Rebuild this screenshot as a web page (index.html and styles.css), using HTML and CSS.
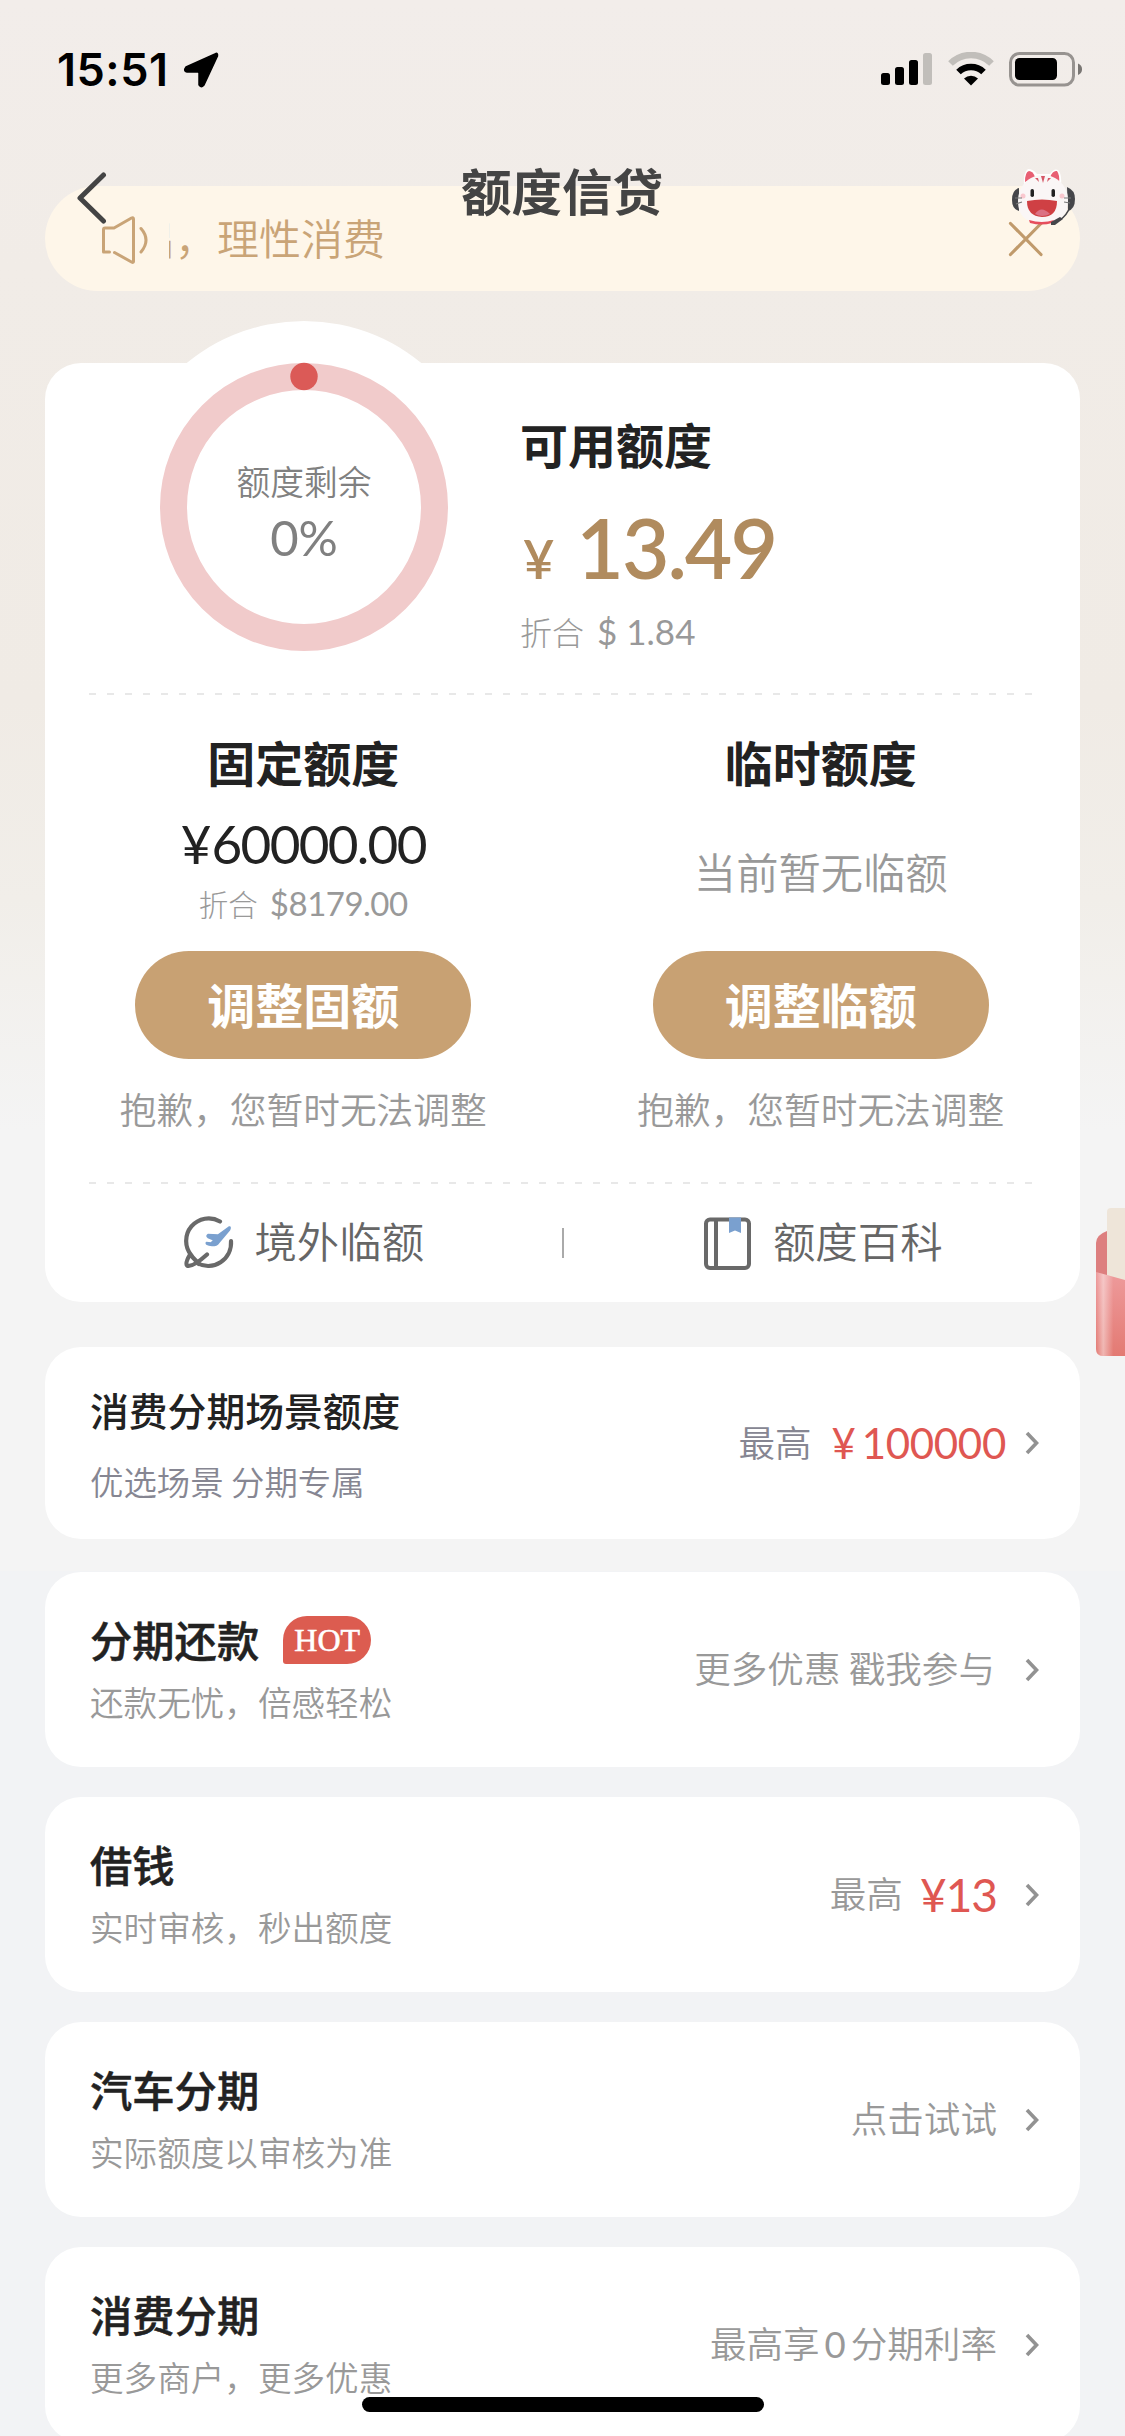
FILE: index.html
```html
<!DOCTYPE html>
<html lang="zh-CN">
<head>
<meta charset="utf-8">
<title>额度信贷</title>
<link rel="stylesheet" href="styles.css">
</head>
<body>
<header class="header">
  <div class="status">
    <div class="status-left">
      <span class="clock">15:51</span>
      <svg class="location" width="36" height="36" viewBox="0 0 36 36"><path d="M32 2 3 15 Q0 19 4 20H15Q16 20 16 21V33Q18 36.500 21 33L34.500 4Q35 0 32 2Z" stroke="#000" stroke-width="1.500" stroke-linejoin="round"/></svg>
    </div>
    <div class="status-right">
      <svg width="52" height="34" viewBox="0 0 52 34"><rect x="0" y="21" width="9" height="12" rx="2.500"/><rect x="14" y="15" width="9" height="18" rx="2.500"/><rect x="28" y="8" width="9" height="25" rx="2.500"/><rect x="42" y="1" width="9" height="32" rx="2.500" fill="#c1beba"/></svg>
      <svg width="46" height="34" viewBox="0 0 46 34"><path d="M2.500 11.500A29 29 0 0 1 43.500 11.500" fill="none" stroke="#c1beba" stroke-width="6.500"/><path d="M10.500 20A18 18 0 0 1 35.500 20" fill="none" stroke="#000" stroke-width="6.500"/><path d="M16 26.500A10.500 10.500 0 0 1 30 26.500L23 33.500Z"/></svg>
      <svg width="74" height="35" viewBox="0 0 74 35"><rect x="1.500" y="1.500" width="63" height="31.500" rx="9" fill="none" stroke="#979390" stroke-width="3"/><rect x="6" y="6" width="42" height="22" rx="4.500"/><path d="M69 11.500Q73 13 73 17.300Q73 21.600 69 23Z" fill="#797673"/></svg>
    </div>
  </div>
  <nav class="nav">
    <svg class="back" width="30" height="52" viewBox="0 0 30 52"><path d="M26.500 3 3 26 26.500 49" fill="none" stroke="#444" stroke-width="5" stroke-linecap="round" stroke-linejoin="round"/></svg>
    <h1 class="title">额度信贷</h1>
    <svg class="mascot" width="66" height="58" viewBox="0 0 66 58">
      <path d="M8 20Q1 22 1 32Q1 41 8 43Z" fill="#45464a"/><path d="M56 19Q64 22 64 31Q64 41 57 43Z" fill="#45464a"/>
      <path d="M13 18Q12 4 17 1Q22 1 26 6L39 6Q43 0 47 2Q51 6 50 18Z" fill="#fff"/>
      <path d="M14 14Q14 4 18 3Q22 3 24 9Z" fill="#e85f73"/><path d="M39 9Q42 2 46 3Q49 7 48 15Z" fill="#e85f73"/>
      <path d="M32 7C46 7 57 18 57 32C57 48 49 55 32 55C15 55 7 48 7 33C7 18 18 7 32 7Z" fill="#faf6f6"/>
      <path d="M30 8h4l-2 7ZM24 10l4 4-1-4ZM40 10l-4 4 1-4Z" fill="#d65867"/>
      <rect x="19.500" y="21" width="3.500" height="8" rx="1.700" fill="#222"/><rect x="40.500" y="21" width="3.500" height="8" rx="1.700" fill="#222"/>
      <path d="M16 33Q31 30 46 33Q46 49 31 49Q16 48 16 33Z" fill="#cf4044"/><path d="M24 46Q30 37 39 46Q31 50 24 46Z" fill="#db7184"/>
      <circle cx="12" cy="28" r="2.500" fill="#f9c8cf"/><circle cx="51" cy="28" r="2.500" fill="#f9c8cf"/>
      <path d="M18 52Q31 56 43 52L41 55Q31 58 19 55Z" fill="#e64e5c"/>
      <path d="M4 30h7M5 36l6-2M60 30h-7M59 35l-6-1" stroke="#777" stroke-width="1.200"/>
      <path d="M59 39Q56 47 49 52" fill="none" stroke="#45464a" stroke-width="1.500"/><path d="M40 54 49 49 52 51 44 57H40Z" fill="#45464a"/>
    </svg>
  </nav>
</header>

<main class="page">
  <div class="notice">
    <svg class="speaker" width="48" height="48" viewBox="0 0 48 48" fill="none" stroke="#c9a477" stroke-width="3" stroke-linecap="round" stroke-linejoin="round"><path d="M8.500 36H2.500V13.500Q2.500 12 4 12H13L30.500 2Q32.500 1 32.500 3V45.500Q32.500 47 30.500 46L13.500 36.500"/><path d="M40 12.500Q50 24 40 36"/></svg>
    <div class="notice-clip"><span class="notice-text">出，理性消费</span></div>
    <svg class="close" width="36" height="38" viewBox="0 0 36 38"><path d="M2.500 3.500 33 34.500M33 3.500 2.500 34.500" stroke="#c09a6b" stroke-width="3.200" stroke-linecap="round"/></svg>
  </div>

  <section class="balance">
    <div class="available">
      <div class="gauge">
        <svg width="370" height="370" viewBox="0 0 370 370"><circle cx="185" cy="185" r="185" fill="#fff"/><circle cx="185" cy="186" r="130.500" fill="none" stroke="#f1cbcb" stroke-width="27"/><circle cx="185" cy="55.500" r="13.700" fill="#db5a57"/></svg>
        <div class="gauge-text"><div class="gauge-label">额度剩余</div><div class="gauge-value">0%</div></div>
      </div>
      <div class="available-text">
        <h2 class="heading">可用额度</h2>
        <div class="amount"><span class="amount-sign">¥</span><span class="amount-value">13.49</span></div>
        <div class="converted">折合<span class="converted-num">$&nbsp;1.84</span></div>
      </div>
    </div>
    <div class="dash"></div>
    <div class="limits">
      <div class="limit">
        <h2 class="heading">固定额度</h2>
        <div class="limit-body">
          <div class="limit-amount">¥<span class="limit-digits">60000.00</span></div>
          <div class="limit-converted">折合<span class="limit-usd">$8179.00</span></div>
        </div>
        <button class="adjust">调整固额</button>
        <p class="note">抱歉，您暂时无法调整</p>
      </div>
      <div class="limit">
        <h2 class="heading">临时额度</h2>
        <div class="limit-body"><div class="limit-empty">当前暂无临额</div></div>
        <button class="adjust">调整临额</button>
        <p class="note">抱歉，您暂时无法调整</p>
      </div>
    </div>
    <div class="dash"></div>
    <div class="links">
      <a class="link">
        <svg width="52" height="54" viewBox="0 0 52 54" fill="none" stroke="#696969" stroke-width="4.200" stroke-linecap="round" stroke-linejoin="round"><path d="M37 5.500A22.500 22.500 0 0 0 8.500 39.500"/><path d="M48 25A23 23 0 0 1 14 47"/><path d="M7 38.500Q2 47 4 49.500Q9 52 24 38.500"/><path d="M8 39.500 16 48"/><path d="M46 11 35 19 25 18.500 Q23 20 25 21.500L31 24 28 27 23.500 26.500Q22 28.500 29 29.500Q34 29.500 35.500 27L46.500 14Q48 10.500 46 11Z" fill="#7aa0cf" stroke="#7aa0cf" stroke-width="1.500"/></svg>
        <span class="link-text">境外临额</span>
      </a>
      <span class="link-rule"></span>
      <a class="link">
        <svg width="52" height="54" viewBox="0 0 52 54" fill="none" stroke="#696969" stroke-width="4"><rect x="4" y="3.500" width="43" height="48.500" rx="4"/><path d="M14 4V52"/><path d="M27 1.500H39V17L33 14.500 27 17Z" fill="#7aa0cf" stroke="none"/></svg>
        <span class="link-text">额度百科</span>
      </a>
    </div>
  </section>

  <section class="row scene">
    <div class="row-main"><h3 class="row-title">消费分期场景额度</h3><p class="row-sub">优选场景 分期专属</p></div>
    <div class="row-side"><span>最高</span><span class="red red-scene"><span class="yen">¥</span>100000</span><svg class="chev" width="16" height="26" viewBox="0 0 16 26"><path d="M3 3 12.500 13 3 23" fill="none" stroke="#929292" stroke-width="3.600"/></svg></div>
  </section>

  <div class="list">
    <section class="row">
      <div class="row-main"><div class="row-head"><h3 class="row-title">分期还款</h3><span class="hot">HOT</span></div><p class="row-sub">还款无忧，倍感轻松</p></div>
      <div class="row-side"><span class="promo">更多优惠 戳我参与</span><svg class="chev" width="16" height="26" viewBox="0 0 16 26"><path d="M3 3 12.500 13 3 23" fill="none" stroke="#929292" stroke-width="3.600"/></svg></div>
    </section>
    <section class="row">
      <div class="row-main"><h3 class="row-title">借钱</h3><p class="row-sub">实时审核，秒出额度</p></div>
      <div class="row-side"><span>最高</span><span class="red red-loan">¥13</span><svg class="chev" width="16" height="26" viewBox="0 0 16 26"><path d="M3 3 12.500 13 3 23" fill="none" stroke="#929292" stroke-width="3.600"/></svg></div>
    </section>
    <section class="row">
      <div class="row-main"><h3 class="row-title">汽车分期</h3><p class="row-sub">实际额度以审核为准</p></div>
      <div class="row-side"><span>点击试试</span><svg class="chev" width="16" height="26" viewBox="0 0 16 26"><path d="M3 3 12.500 13 3 23" fill="none" stroke="#929292" stroke-width="3.600"/></svg></div>
    </section>
    <section class="row">
      <div class="row-main"><h3 class="row-title">消费分期</h3><p class="row-sub">更多商户，更多优惠</p></div>
      <div class="row-side"><span>最高享<span class="zero">0</span>分期利率</span><svg class="chev" width="16" height="26" viewBox="0 0 16 26"><path d="M3 3 12.500 13 3 23" fill="none" stroke="#929292" stroke-width="3.600"/></svg></div>
    </section>
  </div>
</main>

<svg class="wallet" width="30" height="150" viewBox="0 0 30 150">
  <defs>
    <linearGradient id="flap" x1="0" y1="0" x2="0" y2="1"><stop offset="0" stop-color="#ee9b9c"/><stop offset="1" stop-color="#e37a73"/></linearGradient>
    <linearGradient id="shine" x1="0" y1="0" x2="1" y2="0"><stop offset="0" stop-color="#fff" stop-opacity="0"/><stop offset=".25" stop-color="#fff" stop-opacity=".45"/><stop offset=".6" stop-color="#fff" stop-opacity="0"/></linearGradient>
  </defs>
  <path d="M1 36Q1 28 12 24H30V100H1Z" fill="#dd7f7f"/>
  <path d="M12 5Q12 1 16 1H30V76L12 69Z" fill="#eee5d9"/>
  <path d="M1 65 30 73V149H8Q1 149 1 142Z" fill="url(#flap)"/>
  <path d="M1 65 30 73V149H8Q1 149 1 142Z" fill="url(#shine)"/>
</svg>
<div class="home-bar"></div>
</body>
</html>
```
FILE: styles.css
```css
* { box-sizing: border-box; margin: 0; padding: 0; }
body {
  width: 1125px;
  height: 2436px;
  overflow: hidden;
  position: relative;
  background: linear-gradient(180deg, #f2edea 0, #f1ece7 265px, #f0ebe5 700px, #f1eee9 900px, #f4f4f4 1130px, #f4f4f4 1571px, #f2f3f5 1571px);
  font-family: "Noto Sans CJK SC", sans-serif;
  font-kerning: none;
  color: #222;
}
h1, h2, h3 { font-weight: 500; }

/* Header floats over the scrolled page */
.header { position: absolute; top: 0; left: 0; width: 100%; z-index: 2; }
.status { display: flex; justify-content: space-between; height: 138px; padding: 52px 42px 0 57px; }
.status-left, .status-right { display: flex; align-items: flex-start; }
.status-left { gap: 14px; }
.status-right { gap: 15px; }
.clock { font: 600 45px/36px Inter, sans-serif; letter-spacing: 0.5px; color: #000; }
.nav { display: flex; justify-content: space-between; height: 100px; padding: 30px 48px 0 77px; }
.back { margin-top: 4px; }
.title { font-size: 50.500px; line-height: 42px; font-weight: 600; color: #444; margin-left: 6px; }

.page { padding: 186px 45px 0; }
.notice { display: flex; align-items: center; height: 105px; padding: 0 36px 0 56px; border-radius: 53px; background: #fef6e9; }
.speaker { margin-top: 2px; }
.notice-clip { display: flex; flex: 1; margin-left: 20px; overflow: hidden; }
.notice-text { margin: -4px 0 0 -36px; font-size: 42px; line-height: 60px; color: #c9a477; white-space: nowrap; font-weight: 350; }

.balance { height: 939px; margin-top: 72px; border-radius: 36px; background: #fff; }
.available { display: flex; height: 330px; padding-left: 74px; }
.gauge { position: relative; width: 370px; height: 370px; margin-top: -42px; }
.gauge svg { display: block; }
.gauge-text { position: absolute; top: 138px; left: 0; width: 370px; text-align: center; color: #808080; }
.gauge-label { font-size: 33.700px; line-height: 44px; font-weight: 350; }
.gauge-value { font: 400 49px/50px Lato, sans-serif; margin-top: 9px; }
.available-text { margin-left: 31px; padding-top: 50px; }
.heading { font-size: 48px; line-height: 60px; font-weight: 600; }
.amount { display: flex; align-items: baseline; height: 80px; margin-top: 34px; padding-left: 3px; font: 600 82px/80px Lato, sans-serif; color: #b08b5e; }
.amount-sign { font-size: 54px; margin-right: 22px; }
.amount-value { letter-spacing: -2px; }
.converted { margin-top: 22px; font-size: 32px; line-height: 44px; font-weight: 300; color: #999; }
.converted-num { margin-left: 13px; font: 400 35px/44px Lato, sans-serif; }
.dash { height: 2px; margin: 0 44px; background: repeating-linear-gradient(90deg, #e8e8e8 0 7px, transparent 7px 18px); }

.limits { display: flex; height: 487px; padding-right: 1px; }
.limit { display: flex; flex: 1; flex-direction: column; align-items: center; padding-top: 36px; }
.limit:first-child { padding-right: 1px; }
.limit-body { display: flex; flex-direction: column; align-items: center; height: 160px; padding-top: 23px; }
.limit-amount { font: 400 53px/60px Lato, sans-serif; }
.limit-digits { letter-spacing: -1.700px; }
.limit-converted { margin-top: 9px; font-size: 29.500px; line-height: 40px; font-weight: 300; color: #999; }
.limit-usd { margin-left: 12px; font: 400 33px/40px Lato, sans-serif; letter-spacing: -0.5px; }
.limit-empty { margin-top: 27px; font-size: 42.300px; line-height: 60px; color: #999; font-weight: 350; }
.adjust { width: 336px; height: 108px; border: 0; border-radius: 54px; background: #c8a173; color: #fff; font: 600 48px/60px "Noto Sans CJK SC", sans-serif; padding-bottom: 4px; }
.note { margin-top: 24px; font-size: 36.700px; line-height: 50px; font-weight: 350; color: #999; }

.links { display: flex; align-items: center; height: 118px; }
.link { display: flex; flex: 1; justify-content: center; align-items: center; gap: 19px; padding-left: 1px; font-size: 42.400px; line-height: 60px; color: #666; font-weight: 350; }
.link-text { margin-top: -6px; }
.link-rule { width: 2px; height: 30px; background: #aaa; }

.row { display: flex; justify-content: space-between; align-items: center; height: 195px; padding: 0 40px 0 45px; border-radius: 36px; background: #fff; }
.row-main { display: flex; flex-direction: column; margin-top: -4px; }
.row-head { display: flex; align-items: center; gap: 24px; }
.row-title { font-size: 42.300px; line-height: 60px; -webkit-text-stroke: 0.5px #222; }
.row-sub { margin-top: 8px; font-size: 33.600px; line-height: 50px; font-weight: 350; color: #999; }
.hot { width: 88px; height: 48px; margin-top: 3px; border-radius: 24px 24px 24px 3px; background: #dc5c50; color: #fff; font: 400 32px/48px "Liberation Serif", serif; -webkit-text-stroke: 0.6px #fff; text-align: center; }
.row-side { display: flex; align-items: center; font-size: 36.600px; line-height: 50px; font-weight: 350; color: #999; }
.row-side > span:first-child { margin-top: -3px; }
.chev { margin-left: 27px; }
.promo { margin-right: 2px; }
.red { color: #df5752; }
.red-loan { margin-left: 17px; font: 400 46px/50px Lato, sans-serif; letter-spacing: -1px; }
.zero { display: inline-block; width: 31px; text-align: center; font-family: Lato, sans-serif; font-weight: 400; }

.scene { height: 192px; margin-top: 45px; }
.scene .row-title { font-size: 38.800px; -webkit-text-stroke: 0; }
.scene .row-sub { margin-top: 17px; font-size: 33.400px; color: #868692; }
.scene .row-main { margin-top: -1px; }
.scene .row-side { color: #868692; }
.red-scene { margin-left: 20px; font: 400 42px/50px Lato, sans-serif; letter-spacing: -0.300px; }
.yen { margin-right: 6px; }
.scene .chev { margin-left: 18px; }

.list { display: flex; flex-direction: column; gap: 30px; margin-top: 33px; }

.wallet { position: absolute; right: 0; top: 1207px; }
.home-bar { position: absolute; left: 362px; top: 2397px; width: 402px; height: 15px; border-radius: 8px; background: #000; }
```
